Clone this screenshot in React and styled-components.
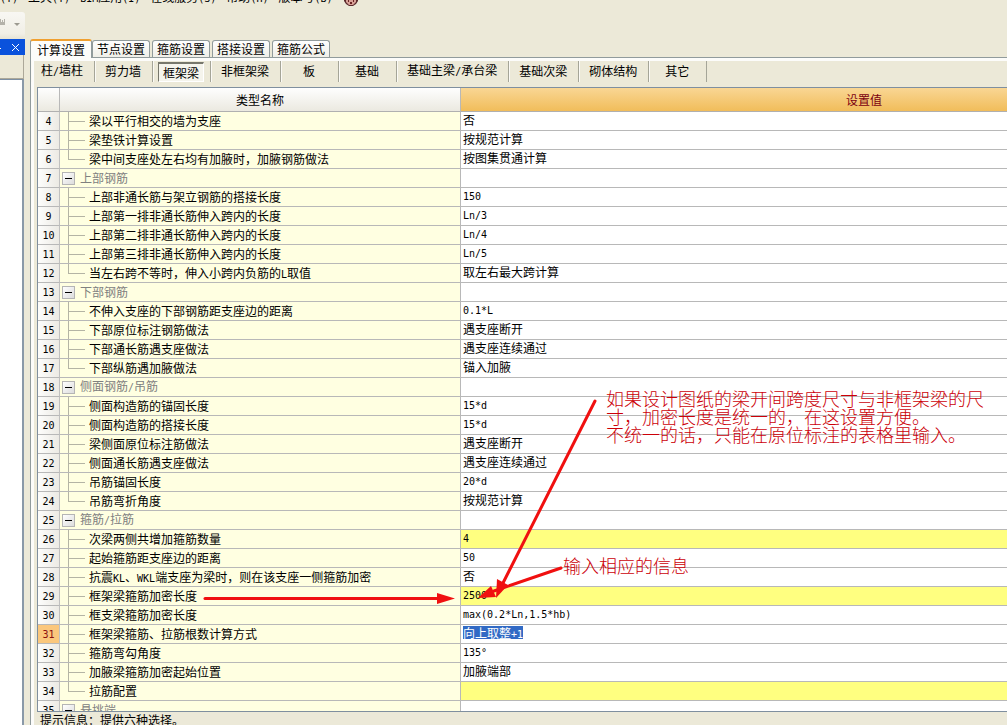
import React from "react";
import styled, { createGlobalStyle } from "styled-components";

const GlobalStyle = createGlobalStyle`
  * {
    box-sizing: border-box;
  }
  body {
    margin: 0;
    overflow: hidden;
    background: #ece9d8;
  }
  body, button {
    font-family: "Noto Sans CJK SC", "Liberation Sans", sans-serif;
    font-size: 12px;
    line-height: 14px;
    color: #000;
  }
`;

const Page = styled.div`
  position: relative;
  height: 100vh;
  display: flex;
  flex-direction: column;
  overflow: hidden;
`;

// latin letters and digits take half the width of a hanzi
const Half = styled.span`
  font-family: "DejaVu Sans Mono", monospace;
  font-size: 10px;
`;

const MenuBar = styled.nav`
  height: 6px;
  display: flex;
  align-items: flex-end;
  gap: 10px;
  overflow: hidden;
`;
const MenuItem = styled.button`
  flex: none;
  padding: 0;
  border: none;
  background: none;
  white-space: nowrap;
`;
const Mascot = styled.svg`
  flex: none;
  display: block;
`;

const ToolArea = styled.div`
  height: 33px;
  padding-top: 6px;
`;
const ToolStrip = styled.div`
  width: 25px;
  height: 27px;
  border-radius: 0 3px 3px 0;
  background: linear-gradient(#f8f7f3, #f1efe6 80%, #e6e3d4);
`;

const Body = styled.div`
  flex: 1;
  min-height: 0;
  display: flex;
`;

const Dock = styled.aside`
  width: 24px;
  flex: none;
  display: flex;
  flex-direction: column;
  margin-right: 6px;
`;
const DockTitle = styled.div`
  height: 16px;
  margin-right: -1px;
  display: flex;
  justify-content: space-between;
  align-items: center;
  background: #0a52dc;
`;
const DockButton = styled.button`
  width: 18px;
  height: 16px;
  padding: 0;
  border: none;
  background: none;
`;
const DockHeader = styled.div`
  height: 24px;
  border-right: 1px solid #aca899;
  border-bottom: 1px solid #aca899;
  background: #ece9d8;
`;
const DockBody = styled.div`
  flex: 1;
  border-top: 1px solid #7d8fa3;
  border-right: 2px solid #8a99a8;
  background: #fff;
`;

const Main = styled.main`
  flex: 1;
  min-width: 0;
  display: flex;
  flex-direction: column;
`;

const Tabs = styled.div`
  display: flex;
  align-items: flex-end;
  gap: 2px;
  height: 18px;
`;
const Tab = styled.button`
  flex: none;
  height: ${(p) => (p.$active ? 19 : 17)}px;
  padding: 0 ${(p) => (p.$active ? 6 : 4)}px;
  margin: ${(p) => (p.$active ? "0 -2px -1px 0" : "0")};
  border: 1px solid #919b9c;
  border-top: ${(p) => (p.$active ? "2px solid #f0a030" : "1px solid #919b9c")};
  border-bottom: none;
  border-radius: 3px 3px 0 0;
  background: ${(p) =>
    p.$active ? "#fcfcfa" : "linear-gradient(#fefefe, #f0efe8)"};
  z-index: ${(p) => (p.$active ? 1 : 0)};
  white-space: nowrap;
`;

const Pane = styled.section`
  flex: 1;
  min-height: 0;
  display: flex;
  flex-direction: column;
  border-top: 1px solid #919b9c;
  border-left: 1px solid #919b9c;
  box-shadow: inset 3px 3px 0 #fcfcfa;
`;

const SubTabs = styled.div`
  display: flex;
  height: 24px;
  padding-top: 3px;
`;
const SubTab = styled.button`
  flex: none;
  min-width: 58px;
  padding: ${(p) => (p.$pressed ? "0 6px 0 4px" : "0 11px 2px 9px")};
  border: none;
  border-left: 1px solid #fbfaf5;
  border-right: 1px solid #a5a598;
  background: none;
  white-space: nowrap;
`;
const Pressed = styled.span`
  display: block;
  height: 20px;
  padding: 2px 4px 0;
  border: 1px solid #fff;
  border-top: 2px solid #77776c;
  border-left-color: #77776c;
  background: #f5f4ec;
`;

const GridBox = styled.div`
  flex: 1;
  min-height: 0;
  margin: 5px 0 0 6px;
  overflow: hidden;
  border: 1px solid #7f8f9f;
  border-right: none;
  background: #fff;
`;
const Grid = styled.table`
  width: 1230px;
  table-layout: fixed;
  border-collapse: separate;
  border-spacing: 0;
`;
const HeadCell = styled.th`
  height: 24px;
  padding: 0;
  border-right: 1px solid #b8b8b8;
  border-bottom: 1px solid #b0b0b0;
  background: ${(p) =>
    p.$current
      ? "linear-gradient(#f9d694, #f1bd5a)"
      : "linear-gradient(#fefefe, #ebe9e0)"};
  color: ${(p) => (p.$current ? "#7b0010" : "#000")};
  font-weight: 400;
`;
const IndexCell = styled.th`
  height: 19px;
  padding: 0;
  border-right: 1px solid #c0c0c0;
  border-bottom: 1px solid #b8b8b8;
  background: ${(p) =>
    p.$current ? "#fbc77c" : "linear-gradient(90deg, #fdfdfc, #eceae4)"};
  color: ${(p) => (p.$current ? "#8b1010" : "#000")};
  font-weight: 400;
`;
const NameCell = styled.td`
  height: 19px;
  padding: 0;
  border-right: 1px solid #b8b8b8;
  border-bottom: 1px solid #b8b8b8;
  background: #ffffe1;
`;
const ValueCell = styled.td`
  height: 19px;
  padding: 0 0 2px 2px;
  border-bottom: 1px solid #b8b8b8;
  background: ${(p) => (p.$changed ? "#ffff80" : "#fff")};
  white-space: nowrap;
`;
const Selected = styled.span`
  display: inline-block;
  height: 13px;
  line-height: 13px;
  background: #316ac5;
  color: #fff;
`;

const Leaf = styled.div`
  display: flex;
  height: 18px;
  padding-left: 8px;
  line-height: 18px;
  white-space: nowrap;
`;
// the last leaf of a group closes the line with an elbow
const Branch = styled.span`
  width: 17px;
  height: ${(p) => (p.$last ? 10 : 18)}px;
  margin-right: 4px;
  border-left: 1px solid #b4b4a4;
  background: linear-gradient(#b4b4a4, #b4b4a4) 0 9px / 17px 1px no-repeat;
`;
const Group = styled.div`
  display: flex;
  align-items: center;
  gap: 5px;
  height: 18px;
  padding-left: 2px;
  color: #808080;
  white-space: nowrap;
`;
const Expander = styled.button`
  display: block;
  width: 13px;
  height: 13px;
  padding: 0 2px;
  border: 1px solid #b5b5b5;
  background: linear-gradient(135deg, #fff, #dcdcdc);

  &::before {
    content: "";
    display: block;
    height: 1px;
    background: #000;
  }
`;

const StatusBar = styled.footer`
  flex: none;
  height: 13px;
  padding-left: 9px;
  line-height: 16px;
  overflow: hidden;
`;

// markup drawn on top of the window
const Arrows = styled.svg`
  position: absolute;
  left: 0;
  top: 0;
  pointer-events: none;
`;
const Note = styled.p`
  position: absolute;
  left: ${(p) => p.$x}px;
  top: ${(p) => p.$y}px;
  margin: 0;
  font-size: 18px;
  font-weight: 300;
  line-height: 18px;
  color: #cc0008;
  white-space: nowrap;
`;

const menus = ["(Y)", "工具(T)", "BIM应用(I)", "在线服务(S)", "帮助(H)", "版本号(B)"];

const tabs = ["计算设置", "节点设置", "箍筋设置", "搭接设置", "箍筋公式"];

const members = [
  "柱/墙柱",
  "剪力墙",
  "框架梁",
  "非框架梁",
  "板",
  "基础",
  "基础主梁/承台梁",
  "基础次梁",
  "砌体结构",
  "其它",
];

const rows = [
  { no: 4, name: "梁以平行相交的墙为支座", value: "否" },
  { no: 5, name: "梁垫铁计算设置", value: "按规范计算" },
  {
    no: 6,
    name: "梁中间支座处左右均有加腋时，加腋钢筋做法",
    value: "按图集贯通计算",
    last: true,
  },
  { no: 7, name: "上部钢筋", group: true },
  { no: 8, name: "上部非通长筋与架立钢筋的搭接长度", value: "150" },
  { no: 9, name: "上部第一排非通长筋伸入跨内的长度", value: "Ln/3" },
  { no: 10, name: "上部第二排非通长筋伸入跨内的长度", value: "Ln/4" },
  { no: 11, name: "上部第三排非通长筋伸入跨内的长度", value: "Ln/5" },
  {
    no: 12,
    name: "当左右跨不等时，伸入小跨内负筋的L取值",
    value: "取左右最大跨计算",
    last: true,
  },
  { no: 13, name: "下部钢筋", group: true },
  { no: 14, name: "不伸入支座的下部钢筋距支座边的距离", value: "0.1*L" },
  { no: 15, name: "下部原位标注钢筋做法", value: "遇支座断开" },
  { no: 16, name: "下部通长筋遇支座做法", value: "遇支座连续通过" },
  { no: 17, name: "下部纵筋遇加腋做法", value: "锚入加腋", last: true },
  { no: 18, name: "侧面钢筋/吊筋", group: true },
  { no: 19, name: "侧面构造筋的锚固长度", value: "15*d" },
  { no: 20, name: "侧面构造筋的搭接长度", value: "15*d" },
  { no: 21, name: "梁侧面原位标注筋做法", value: "遇支座断开" },
  { no: 22, name: "侧面通长筋遇支座做法", value: "遇支座连续通过" },
  { no: 23, name: "吊筋锚固长度", value: "20*d" },
  { no: 24, name: "吊筋弯折角度", value: "按规范计算", last: true },
  { no: 25, name: "箍筋/拉筋", group: true },
  { no: 26, name: "次梁两侧共增加箍筋数量", value: "4", changed: true },
  { no: 27, name: "起始箍筋距支座边的距离", value: "50" },
  { no: 28, name: "抗震KL、WKL端支座为梁时，则在该支座一侧箍筋加密", value: "否" },
  { no: 29, name: "框架梁箍筋加密长度", value: "2500", changed: true },
  { no: 30, name: "框支梁箍筋加密长度", value: "max(0.2*Ln,1.5*hb)" },
  {
    no: 31,
    name: "框架梁箍筋、拉筋根数计算方式",
    value: "向上取整+1",
    current: true,
  },
  { no: 32, name: "箍筋弯勾角度", value: "135°" },
  { no: 33, name: "加腋梁箍筋加密起始位置", value: "加腋端部" },
  { no: 34, name: "拉筋配置", value: "", changed: true, last: true },
  { no: 35, name: "悬挑端", group: true },
];

const Text = ({ children }) =>
  String(children)
    .split(/([\x20-\x7e°]+)/)
    .filter(Boolean)
    .map((part, i) =>
      /^[\x20-\x7e°]/.test(part) ? <Half key={i}>{part}</Half> : part
    );

const Row = ({ row }) => (
  <tr>
    <IndexCell scope="row" $current={row.current}>
      <Text>{row.no}</Text>
    </IndexCell>
    <NameCell>
      {row.group ? (
        <Group>
          <Expander aria-label={row.name} />
          <span>
            <Text>{row.name}</Text>
          </span>
        </Group>
      ) : (
        <Leaf>
          <Branch $last={row.last} />
          <span>
            <Text>{row.name}</Text>
          </span>
        </Leaf>
      )}
    </NameCell>
    <ValueCell $changed={row.changed}>
      {row.current ? (
        <Selected>
          <Text>{row.value}</Text>
        </Selected>
      ) : (
        <Text>{row.value || ""}</Text>
      )}
    </ValueCell>
  </tr>
);

const App = () => {
  return (
    <Page>
      <GlobalStyle />
      <MenuBar>
        {menus.map((item) => (
          <MenuItem key={item}>
            <Text>{item}</Text>
          </MenuItem>
        ))}
        <Mascot width="16" height="16" viewBox="0 0 16 16">
          <path d="M1 4h14v7l-2 3-3 2H6l-3-2-2-3z" fill="#5a2a2c" />
          <path d="M3 9h10v3l-3 3H6l-3-3z" fill="#d8a096" />
          <path d="M5 10h1v2H5zM10 10h1v2h-1zM7 12h2v2H7z" fill="#6a2424" />
        </Mascot>
      </MenuBar>
      <ToolArea>
        <ToolStrip>
          <svg width="25" height="27" viewBox="0 0 25 27">
            <path d="M0 7h1v3h1V8h1v2h1V7h1v6H0z" fill="#b4b2aa" />
            <path d="M14 11h6l-3 3z" fill="#9c9a90" />
          </svg>
        </ToolStrip>
      </ToolArea>
      <Body>
        <Dock>
          <DockTitle>
            <svg width="4" height="16" viewBox="0 0 4 16">
              <path d="M0 9.500h1" stroke="#fff" />
            </svg>
            <DockButton aria-label="关闭">
              <svg width="18" height="16" viewBox="0 0 18 16">
                <path d="M5 5l7 7M12 5l-7 7" stroke="#fff" />
              </svg>
            </DockButton>
          </DockTitle>
          <DockHeader />
          <DockBody />
        </Dock>
        <Main>
          <Tabs>
            {tabs.map((tab, i) => (
              <Tab key={tab} $active={i === 0}>
                {tab}
              </Tab>
            ))}
          </Tabs>
          <Pane>
            <SubTabs>
              {members.map((member) => (
                <SubTab key={member} $pressed={member === "框架梁"}>
                  {member === "框架梁" ? (
                    <Pressed>{member}</Pressed>
                  ) : (
                    <Text>{member}</Text>
                  )}
                </SubTab>
              ))}
            </SubTabs>
            <GridBox>
              <Grid>
                <colgroup>
                  <col width="22" />
                  <col width="401" />
                  <col />
                </colgroup>
                <thead>
                  <tr>
                    <HeadCell />
                    <HeadCell scope="col">类型名称</HeadCell>
                    <HeadCell scope="col" $current>
                      设置值
                    </HeadCell>
                  </tr>
                </thead>
                <tbody>
                  {rows.map((row) => (
                    <Row key={row.no} row={row} />
                  ))}
                </tbody>
              </Grid>
            </GridBox>
            <StatusBar>提示信息：提供六种选择。</StatusBar>
          </Pane>
        </Main>
      </Body>
      <Arrows width="1007" height="725" viewBox="0 0 1007 725">
        <g stroke="#f01010" strokeWidth="3" strokeLinecap="round">
          <path d="M205 598.500H440" />
          <path d="M595 401L502 585" />
          <path d="M561 568L494 591" />
        </g>
        <g fill="#f01010">
          <path d="M437 593l18 5.500-18 5.500z" />
          <path d="M497 579l11 6-12 13z" />
          <path d="M478 598l13-12 5 11z" />
        </g>
      </Arrows>
      <Note $x={606} $y={389}>
        如果设计图纸的梁开间跨度尺寸与非框架梁的尺
        <br />
        寸，加密长度是统一的，在这设置方便。
        <br />
        不统一的话，只能在原位标注的表格里输入。
      </Note>
      <Note $x={563} $y={556}>
        输入相应的信息
      </Note>
    </Page>
  );
};

export default App;
